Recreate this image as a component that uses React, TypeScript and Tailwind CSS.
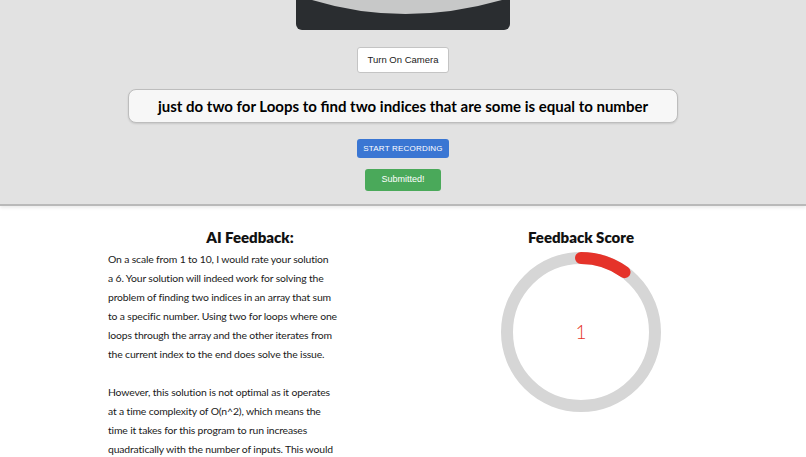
import React from "react";

// feedback text, broken into the lines the panel shows
const feedback: string[][] = [
  [
    "On a scale from 1 to 10, I would rate your solution",
    "a 6. Your solution will indeed work for solving the",
    "problem of finding two indices in an array that sum",
    "to a specific number. Using two for loops where one",
    "loops through the array and the other iterates from",
    "the current index to the end does solve the issue.",
  ],
  [
    "However, this solution is not optimal as it operates",
    "at a time complexity of O(n^2), which means the",
    "time it takes for this program to run increases",
    "quadratically with the number of inputs. This would",
  ],
];

function ScoreRing({ score, max = 10 }: { score: number; max?: number }) {
  const r = 74;
  const c = 2 * Math.PI * r;
  const filled = (score / max) * c;
  return (
    <div className="relative h-[164px] w-[164px]">
      <svg width="164" height="164" viewBox="0 0 164 164" className="-rotate-90">
        <circle cx="82" cy="82" r={r} fill="none" stroke="#d6d6d6" strokeWidth="12" />
        <circle
          cx="82"
          cy="82"
          r={r}
          fill="none"
          stroke="#e5332a"
          strokeWidth="12"
          strokeLinecap="round"
          strokeDasharray={`${filled} ${c}`}
        />
      </svg>
      <div className="absolute inset-0 flex items-center justify-center text-[19px] font-light text-[#e5332a]">
        {score}
      </div>
    </div>
  );
}

export default function App() {
  return (
    <div className="h-[457px] overflow-hidden bg-white font-['Lato',sans-serif] text-[#111]">
      <div className="flex h-[206px] flex-col items-center border-b-2 border-[#b9b9b9] bg-[#e2e2e2] shadow-[0_2px_3px_rgba(0,0,0,0.08)]">
        {/* video preview, scrolled mostly out of view */}
        <div className="h-[30px] w-[214px] overflow-hidden rounded-b-[6px] bg-[#2a2d30]">
          <svg width="214" height="30" viewBox="0 0 214 30">
            <path d="M16 0 Q108 28 206 0 Z" fill="#c7c8c8" />
          </svg>
        </div>

        <button className="mt-[17px] h-[26px] w-[92px] rounded-[3px] border border-[#c4c4c4] bg-white text-[9.5px] font-medium text-[#222] font-['Liberation_Sans',Arial,sans-serif]">
          Turn On Camera
        </button>

        <div className="mt-[16px] flex h-[34px] w-[550px] items-center justify-center rounded-[8px] border border-[#bdbdbd] bg-[#f7f7f7] shadow-[0_1px_2px_rgba(0,0,0,0.12)]">
          <span className="text-[15px] font-bold text-black">
            just do two for Loops to find two indices that are some is equal to number
          </span>
        </div>

        <button className="mt-[16px] h-[19px] w-[92px] rounded-[3px] bg-[#3a76d3] text-[8px] font-medium tracking-[0.2px] text-white font-['Liberation_Sans',Arial,sans-serif]">
          START RECORDING
        </button>

        <button className="mt-[11px] h-[22px] w-[76px] rounded-[3px] bg-[#4aa95a] text-[9px] text-white font-['Liberation_Sans',Arial,sans-serif]">
          Submitted!
        </button>
      </div>

      <div className="flex pt-[22px]">
        <div className="ml-[108px] w-[284px]">
          <h2 className="text-center text-[15px] font-extrabold leading-[18px]">AI Feedback:</h2>
          <div className="mt-[4px] flex flex-col gap-[19px] text-[10.4px] leading-[19px] tracking-[-0.15px] text-[#1a1a1a]">
            {feedback.map((para, i) => (
              <p key={i}>
                {para.map((line) => (
                  <span key={line} className="block whitespace-nowrap">
                    {line}
                  </span>
                ))}
              </p>
            ))}
          </div>
        </div>

        <div className="ml-[107px] flex w-[164px] flex-col items-center">
          <h2 className="text-center text-[15px] font-extrabold leading-[18px]">Feedback Score</h2>
          <div className="mt-[4px]">
            <ScoreRing score={1} />
          </div>
        </div>
      </div>
    </div>
  );
}
